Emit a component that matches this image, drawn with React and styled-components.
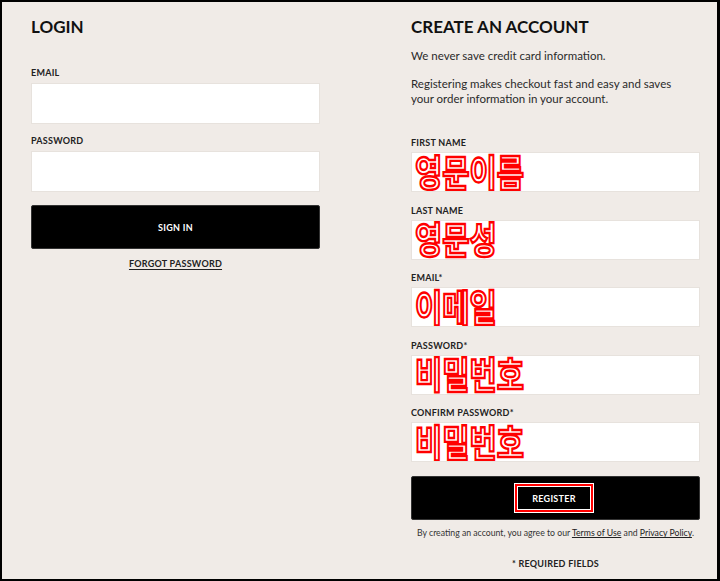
import React from 'react';
import styled, { createGlobalStyle } from 'styled-components';

const GlobalStyle = createGlobalStyle`
  html, body {
    margin: 0;
    padding: 0;
    background: #000;
  }
  * {
    box-sizing: border-box;
  }
`;

const Page = styled.div`
  width: 720px;
  height: 581px;
  border-style: solid;
  border-color: #000;
  border-width: 2px 3px 2px 2px;
  background: #f0ebe7;
  display: grid;
  grid-template-columns: 289px 289px;
  column-gap: 91px;
  padding: 14px 17px 0 29px;
  font-family: 'Lato', 'Liberation Sans', sans-serif;
  color: #1c1c1c;
  overflow: hidden;
`;

const Column = styled.section`
  display: flex;
  flex-direction: column;
`;

const Title = styled.h2`
  margin: 0;
  font-size: 17px;
  line-height: 22px;
  font-weight: 700;
  color: #111;
`;

const Intro = styled.p`
  margin: ${(p) => p.$top}px 0 0;
  max-width: 275px;
  font-size: 11.5px;
  line-height: 15px;
  color: #2a2a2a;
`;

const Field = styled.div`
  margin-top: ${(p) => p.$top}px;
  display: flex;
  flex-direction: column;
`;

const Label = styled.label`
  font-size: 9px;
  line-height: 12px;
  font-weight: 700;
  letter-spacing: 0.25px;
  color: #222;
  margin-bottom: ${(p) => p.$gap || 3}px;
`;

const TextBox = styled.div`
  height: ${(p) => p.$h || 40}px;
  background: #fff;
  border: 1px solid #e7e2dd;
  display: flex;
  align-items: center;
  padding-left: 3px;
  overflow: hidden;
`;

const Annotation = styled.span`
  display: inline-block;
  font-family: 'Noto Sans CJK KR', sans-serif;
  font-weight: 700;
  font-size: 37px;
  line-height: 1;
  color: #fff;
  -webkit-text-stroke: 2.4px #ff0000;
  transform: translateY(-1px) scaleX(0.8);
  transform-origin: left center;
  white-space: nowrap;
`;

const Button = styled.button`
  margin-top: ${(p) => p.$top}px;
  height: 44px;
  width: 100%;
  background: #000;
  border: 1px solid #333;
  border-radius: 2px;
  color: #fff;
  font-family: inherit;
  font-size: 9px;
  font-weight: 700;
  letter-spacing: 0.3px;
  display: flex;
  align-items: center;
  justify-content: center;
  cursor: pointer;
`;

const Highlight = styled.span`
  width: 78px;
  height: 28px;
  border: 2px solid #ff0000;
  box-shadow: 0 0 0 1px #fff, inset 0 0 0 1px #fff;
  display: flex;
  align-items: center;
  justify-content: center;
  margin-right: 3px;
`;

const TextLink = styled.a`
  margin-top: 9px;
  align-self: center;
  font-size: 9px;
  line-height: 12px;
  font-weight: 700;
  letter-spacing: 0.25px;
  color: #222;
  text-decoration: underline;
  text-underline-offset: 2px;
`;

const Terms = styled.p`
  margin: 7px 0 0;
  text-align: center;
  font-size: 8.7px;
  line-height: 12px;
  color: #333;

  a {
    color: #222;
    text-decoration: underline;
  }
`;

const Required = styled.p`
  margin: 19px 0 0;
  text-align: center;
  font-size: 9px;
  line-height: 12px;
  font-weight: 700;
  letter-spacing: 0.25px;
  color: #222;
`;

const registerFields = [
  { label: 'FIRST NAME', value: '영문이름' },
  { label: 'LAST NAME', value: '영문성' },
  { label: 'EMAIL*', value: '이메일' },
  { label: 'PASSWORD*', value: '비밀번호' },
  { label: 'CONFIRM PASSWORD*', value: '비밀번호' },
];

export default function App() {
  return (
    <>
      <GlobalStyle />
      <Page>
        <Column>
          <Title>LOGIN</Title>
          <Field $top={29}>
            <Label $gap={4}>EMAIL</Label>
            <TextBox $h={41} />
          </Field>
          <Field $top={11}>
            <Label $gap={4}>PASSWORD</Label>
            <TextBox $h={41} />
          </Field>
          <Button $top={13}>SIGN IN</Button>
          <TextLink href="#">FORGOT PASSWORD</TextLink>
        </Column>

        <Column>
          <Title>CREATE AN ACCOUNT</Title>
          <Intro $top={10}>We never save credit card information.</Intro>
          <Intro $top={13}>
            Registering makes checkout fast and easy and saves your order information in your account.
          </Intro>
          {registerFields.map((f, i) => (
            <Field key={f.label} $top={i === 0 ? 31 : 12.5}>
              <Label>{f.label}</Label>
              <TextBox>
                <Annotation>{f.value}</Annotation>
              </TextBox>
            </Field>
          ))}
          <Button $top={14}>
            <Highlight>REGISTER</Highlight>
          </Button>
          <Terms>
            By creating an account, you agree to our <a href="#">Terms of Use</a> and{' '}
            <a href="#">Privacy Policy</a>.
          </Terms>
          <Required>* REQUIRED FIELDS</Required>
        </Column>
      </Page>
    </>
  );
}
